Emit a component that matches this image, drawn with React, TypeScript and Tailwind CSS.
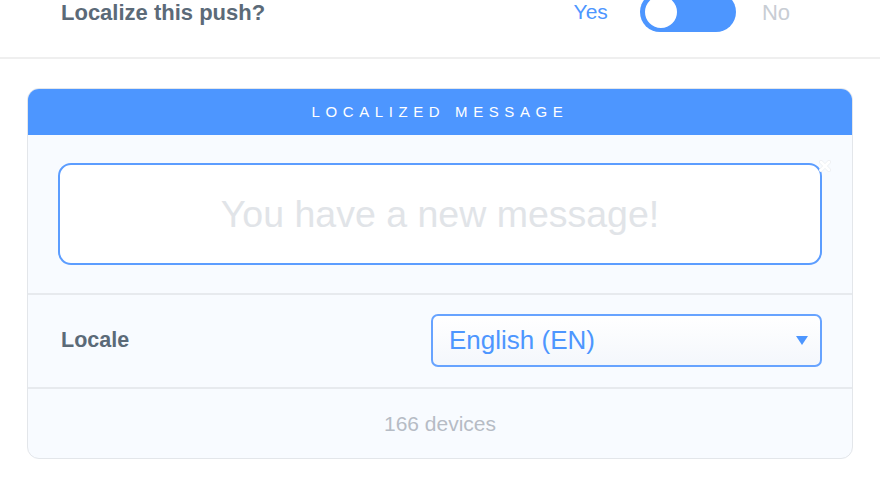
import { useState } from "react"

const FONT = "font-['Liberation_Sans',Arial,Helvetica,sans-serif]"

function Toggle({ on, onChange }: { on: boolean; onChange: (v: boolean) => void }) {
  return (
    <button
      type="button"
      onClick={() => onChange(!on)}
      aria-pressed={on}
      className={`flex h-[40px] w-[96px] shrink-0 items-center rounded-full px-[3px] ${
        on ? "justify-start bg-[#4d96ff]" : "justify-end bg-[#d5dae0]"
      }`}
    >
      <span className="block size-[36px] rounded-full border-2 border-[#4d96ff] bg-white" />
    </button>
  )
}

export default function App() {
  const [localize, setLocalize] = useState(true)

  return (
    <div className={`h-[480px] w-[880px] overflow-hidden bg-white ${FONT}`}>
      <div className="border-b-2 border-[#efefef] pb-[33px]">
        <div className="flex h-6 items-center pl-[61px] pr-[90px]">
          <span className="text-[22px] font-bold text-[#5b6a78]">Localize this push?</span>
          <div className="ml-auto flex items-center">
            <span className="mr-[32px] text-[21px] text-[#4d96ff]">Yes</span>
            <Toggle on={localize} onChange={setLocalize} />
            <span className="ml-[26px] text-[22px] text-[#c8cdd4]">No</span>
          </div>
        </div>
      </div>

      <div className="mx-[27px] mt-[29px] overflow-hidden rounded-[12px] border border-[#e3e6ea] bg-[#f8fbff]">
        <div className="flex h-[46px] items-center justify-center bg-[#4d96ff]">
          <span className="text-[15px] tracking-[5.6px] text-white">LOCALIZED MESSAGE</span>
        </div>

        <div className="px-[30px] py-[28px]">
          <div className="relative flex h-[102px] items-center justify-center rounded-[13px] border-2 border-[#5c9dff] bg-white">
            <span className="text-[37.5px] text-[#e1e4e8]">You have a new message!</span>
            <svg
              className="absolute -right-[11px] -top-[5px]"
              width="12"
              height="12"
              viewBox="0 0 12 12"
              aria-hidden
            >
              <path d="M2 2L10 10M10 2L2 10" stroke="#eef0f3" strokeWidth="4" strokeLinecap="round" />
              <path d="M2 2L10 10M10 2L2 10" stroke="#ffffff" strokeWidth="2.5" strokeLinecap="round" />
            </svg>
          </div>
        </div>

        <div className="flex items-center border-t-2 border-[#e7eaee] pb-[20px] pl-[33px] pr-[30px] pt-[19px]">
          <span className="text-[21.5px] font-bold text-[#5b6a78]">Locale</span>
          <div className="ml-auto flex h-[53px] w-[391px] items-center rounded-[7px] border-2 border-[#67a3ff] bg-gradient-to-b from-white to-[#f4f7fc] pl-[16px] pr-[12px]">
            <span className="text-[26px] text-[#4d96ff]">English (EN)</span>
            <svg className="ml-auto" width="12" height="9" viewBox="0 0 12 9" aria-hidden>
              <path d="M0 0H12L6 9Z" fill="#4d96ff" />
            </svg>
          </div>
        </div>

        <div className="flex h-[71px] items-center justify-center border-t-2 border-[#e7eaee]">
          <span className="text-[21px] text-[#b6bcc5]">166 devices</span>
        </div>
      </div>
    </div>
  )
}
